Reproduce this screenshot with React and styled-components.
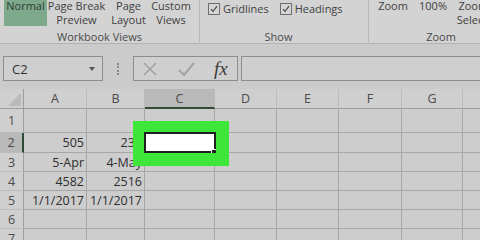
import React from 'react'
import styled, { createGlobalStyle } from 'styled-components'

const Global = createGlobalStyle`
  html, body {
    margin: 0;
    padding: 0;
    background: #cbcbcb;
    overflow: hidden;
  }
  body {
    font-family: "Open Sans", "Noto Sans", sans-serif;
    color: #404040;
  }
`

const Screen = styled.div`
  width: 480px;
  height: 240px;
  overflow: hidden;
  background: #cbcbcb;
`

const Ribbon = styled.div`
  display: flex;
  height: 43px;
  background: #d3d3d3;
  border-bottom: 1px solid #b2b2b2;
  overflow: hidden;
`

const Group = styled.div`
  display: flex;
  flex-direction: column;
  justify-content: space-between;
  flex-shrink: 0;
  width: ${p => p.$w}px;
  height: 42px;
  padding-left: ${p => p.$pl || 0}px;
  box-sizing: border-box;
  border-right: ${p => (p.$last ? 'none' : '1px solid #b9b9b9')};
`

const GroupBody = styled.div`
  display: flex;
  align-items: flex-start;
  gap: ${p => p.$gap || 0}px;
  padding-left: ${p => p.$pl || 0}px;
`

const GroupLabel = styled.div`
  font-size: 11px;
  line-height: 14px;
  height: 13px;
  text-align: center;
  padding-right: ${p => p.$pr || 0}px;
  color: #4a4a4a;
  margin-bottom: -1px;
`

const ViewButton = styled.div`
  width: ${p => p.$w}px;
  height: 27px;
  margin-top: -1px;
  flex-shrink: 0;
  font-size: 11px;
  line-height: 14px;
  text-align: center;
  white-space: nowrap;
  background: ${p => (p.$active ? '#7fa98b' : 'transparent')};
  color: ${p => (p.$active ? '#2f3b33' : '#414141')};
`

const Check = styled.label`
  display: flex;
  align-items: center;
  gap: 3px;
  height: 11px;
  margin-top: 3px;
  font-size: 11px;
  color: #414141;
`

const Box = styled.span`
  width: 10px;
  height: 10px;
  border: 1px solid #6e6e6e;
  background: #d6d6d6;
  display: flex;
  align-items: center;
  justify-content: center;
`

const FormulaRow = styled.div`
  display: flex;
  align-items: flex-start;
  height: 45px;
  padding: 12px 0 0 3px;
  box-sizing: border-box;
`

const NameBox = styled.div`
  display: flex;
  align-items: center;
  justify-content: space-between;
  width: 100px;
  height: 25px;
  box-sizing: border-box;
  padding: 0 7px 0 8px;
  border: 1px solid #8d8d8d;
  background: #cfcfcf;
  font-size: 13px;
  color: #333;
`

const Caret = styled.span`
  width: 0;
  height: 0;
  border-left: 3px solid transparent;
  border-right: 3px solid transparent;
  border-top: 4px solid #555;
`

const Grip = styled.div`
  width: 30px;
  height: 25px;
  display: flex;
  justify-content: center;
  align-items: center;
  &::before {
    content: '';
    height: 12px;
    border-left: 2px dotted #8a8a8a;
  }
`

const FxBox = styled.div`
  display: flex;
  align-items: center;
  width: 105px;
  height: 25px;
  box-sizing: border-box;
  padding-left: 8px;
  gap: 19px;
  border: 1px solid #8d8d8d;
  background: #cfcfcf;
`

const Fx = styled.span`
  font-family: "Liberation Serif", serif;
  font-style: italic;
  font-size: 19px;
  line-height: 20px;
  color: #3a3a3a;
`

const FormulaInput = styled.div`
  flex: 1;
  height: 25px;
  margin-left: 3px;
  box-sizing: border-box;
  border: 1px solid #8d8d8d;
  border-right: none;
  background: #cfcfcf;
`

const Sheet = styled.div`
  display: grid;
  grid-template-columns: 24px 63px 58px 70px 62px 62px 63px 61px 60px;
  grid-template-rows: 20px 24px 20px 19px 19px 19px 19px 19px;
  font-size: 12.5px;
`

const ColHead = styled.div`
  display: flex;
  align-items: center;
  justify-content: center;
  box-sizing: border-box;
  background: ${p => (p.$sel ? '#b9b9b9' : '#cfcfcf')};
  border-right: 1px solid #bcbcbc;
  border-bottom: ${p => (p.$sel ? '2px solid #2f4a37' : '1px solid #9d9d9d')};
  color: #4a4a4a;
`

const RowHead = styled.div`
  display: flex;
  align-items: center;
  justify-content: center;
  box-sizing: border-box;
  background: ${p => (p.$sel ? '#b9b9b9' : '#cfcfcf')};
  border-right: ${p => (p.$sel ? '2px solid #2f4a37' : '1px solid #9d9d9d')};
  border-bottom: 1px solid #bcbcbc;
  color: #4a4a4a;
`

const Corner = styled.div`
  display: flex;
  align-items: flex-end;
  justify-content: flex-end;
  padding: 0 2px 2px 0;
  box-sizing: border-box;
  background: #cfcfcf;
  border-right: 1px solid #9d9d9d;
  border-bottom: 1px solid #9d9d9d;
`

const Cell = styled.div`
  position: ${p => (p.$sel ? 'relative' : 'static')};
  z-index: ${p => (p.$sel ? 2 : 'auto')};
  display: flex;
  align-items: center;
  justify-content: flex-end;
  padding-right: 2px;
  box-sizing: border-box;
  white-space: nowrap;
  background: ${p => (p.$sel ? '#ffffff' : '#cdcdcd')};
  border-right: 1px solid #a7a7a7;
  border-bottom: 1px solid #a7a7a7;
  color: #2e2e2e;
`

const Selection = styled.div`
  position: absolute;
  top: -1px;
  left: -1px;
  right: -2px;
  bottom: -1px;
  border: 2px solid #1f1f1f;
  box-shadow: 0 0 0 1px #e9f5e9;
`

const Handle = styled.div`
  position: absolute;
  right: -4px;
  bottom: -4px;
  width: 5px;
  height: 5px;
  background: #1f1f1f;
  border: 1px solid #e9f5e9;
`

const Marker = styled.div`
  position: absolute;
  top: -12px;
  left: -12px;
  right: -15px;
  bottom: -14px;
  border-style: solid;
  border-color: #3ee63a;
  border-width: 11px 13px 13px 11px;
`

const cols = ['A', 'B', 'C', 'D', 'E', 'F', 'G', '']

const data = {
  2: ['505', '236'],
  3: ['5-Apr', '4-May'],
  4: ['4582', '2516'],
  5: ['1/1/2017', '1/1/2017'],
}

const Tick = () => (
  <svg width="8" height="8" viewBox="0 0 8 8">
    <path d="M1 4.2 L3 6.4 L7 1.2" fill="none" stroke="#444" strokeWidth="1.1" />
  </svg>
)

function Ribbons() {
  return (
    <Ribbon>
      <Group $w={200}>
        <GroupBody $pl={4}>
          <ViewButton $w={43} $active>Normal</ViewButton>
          <ViewButton $w={59}>Page Break<br />Preview</ViewButton>
          <ViewButton $w={45}>Page<br />Layout</ViewButton>
          <ViewButton $w={40}>Custom<br />Views</ViewButton>
        </GroupBody>
        <GroupLabel>Workbook Views</GroupLabel>
      </Group>
      <Group $w={169} $pl={8}>
        <GroupBody $gap={11}>
          <Check>
            <Box><Tick /></Box>
            Gridlines
          </Check>
          <Check>
            <Box><Tick /></Box>
            Headings
          </Check>
        </GroupBody>
        <GroupLabel $pr={19}>Show</GroupLabel>
      </Group>
      <Group $w={140} $pl={4} $last>
        <GroupBody>
          <ViewButton $w={40}>Zoom</ViewButton>
          <ViewButton $w={40}>100%</ViewButton>
          <ViewButton $w={54}>Zoom to<br />Selection</ViewButton>
        </GroupBody>
        <GroupLabel>Zoom</GroupLabel>
      </Group>
    </Ribbon>
  )
}

function FormulaBar() {
  return (
    <FormulaRow>
      <NameBox>
        C2
        <Caret />
      </NameBox>
      <Grip />
      <FxBox>
        <svg width="16" height="16" viewBox="0 0 16 16">
          <path d="M2 2 L14 14 M14 2 L2 14" stroke="#9c9c9c" strokeWidth="1.3" fill="none" />
        </svg>
        <svg width="18" height="16" viewBox="0 0 18 16">
          <path d="M2 9 L7 14 L17 2" stroke="#a2a2a2" strokeWidth="2" fill="none" />
        </svg>
        <Fx>fx</Fx>
      </FxBox>
      <FormulaInput />
    </FormulaRow>
  )
}

function Grid() {
  const rows = [1, 2, 3, 4, 5, 6, 7]
  return (
    <Sheet>
      <Corner>
        <svg width="13" height="13" viewBox="0 0 13 13">
          <polygon points="13,0 13,13 0,13" fill="#bababa" />
        </svg>
      </Corner>
      {cols.map((c, i) => (
        <ColHead key={i} $sel={c === 'C'}>{c}</ColHead>
      ))}
      {rows.map(r => (
        <React.Fragment key={r}>
          <RowHead $sel={r === 2}>{r}</RowHead>
          {cols.map((c, i) => {
            const sel = r === 2 && c === 'C'
            return (
              <Cell key={i} $sel={sel}>
                {data[r] && i < 2 ? data[r][i] : ''}
                {sel && (
                  <>
                    <Selection />
                    <Handle />
                    <Marker />
                  </>
                )}
              </Cell>
            )
          })}
        </React.Fragment>
      ))}
    </Sheet>
  )
}

export default function App() {
  return (
    <Screen>
      <Global />
      <Ribbons />
      <FormulaBar />
      <Grid />
    </Screen>
  )
}
